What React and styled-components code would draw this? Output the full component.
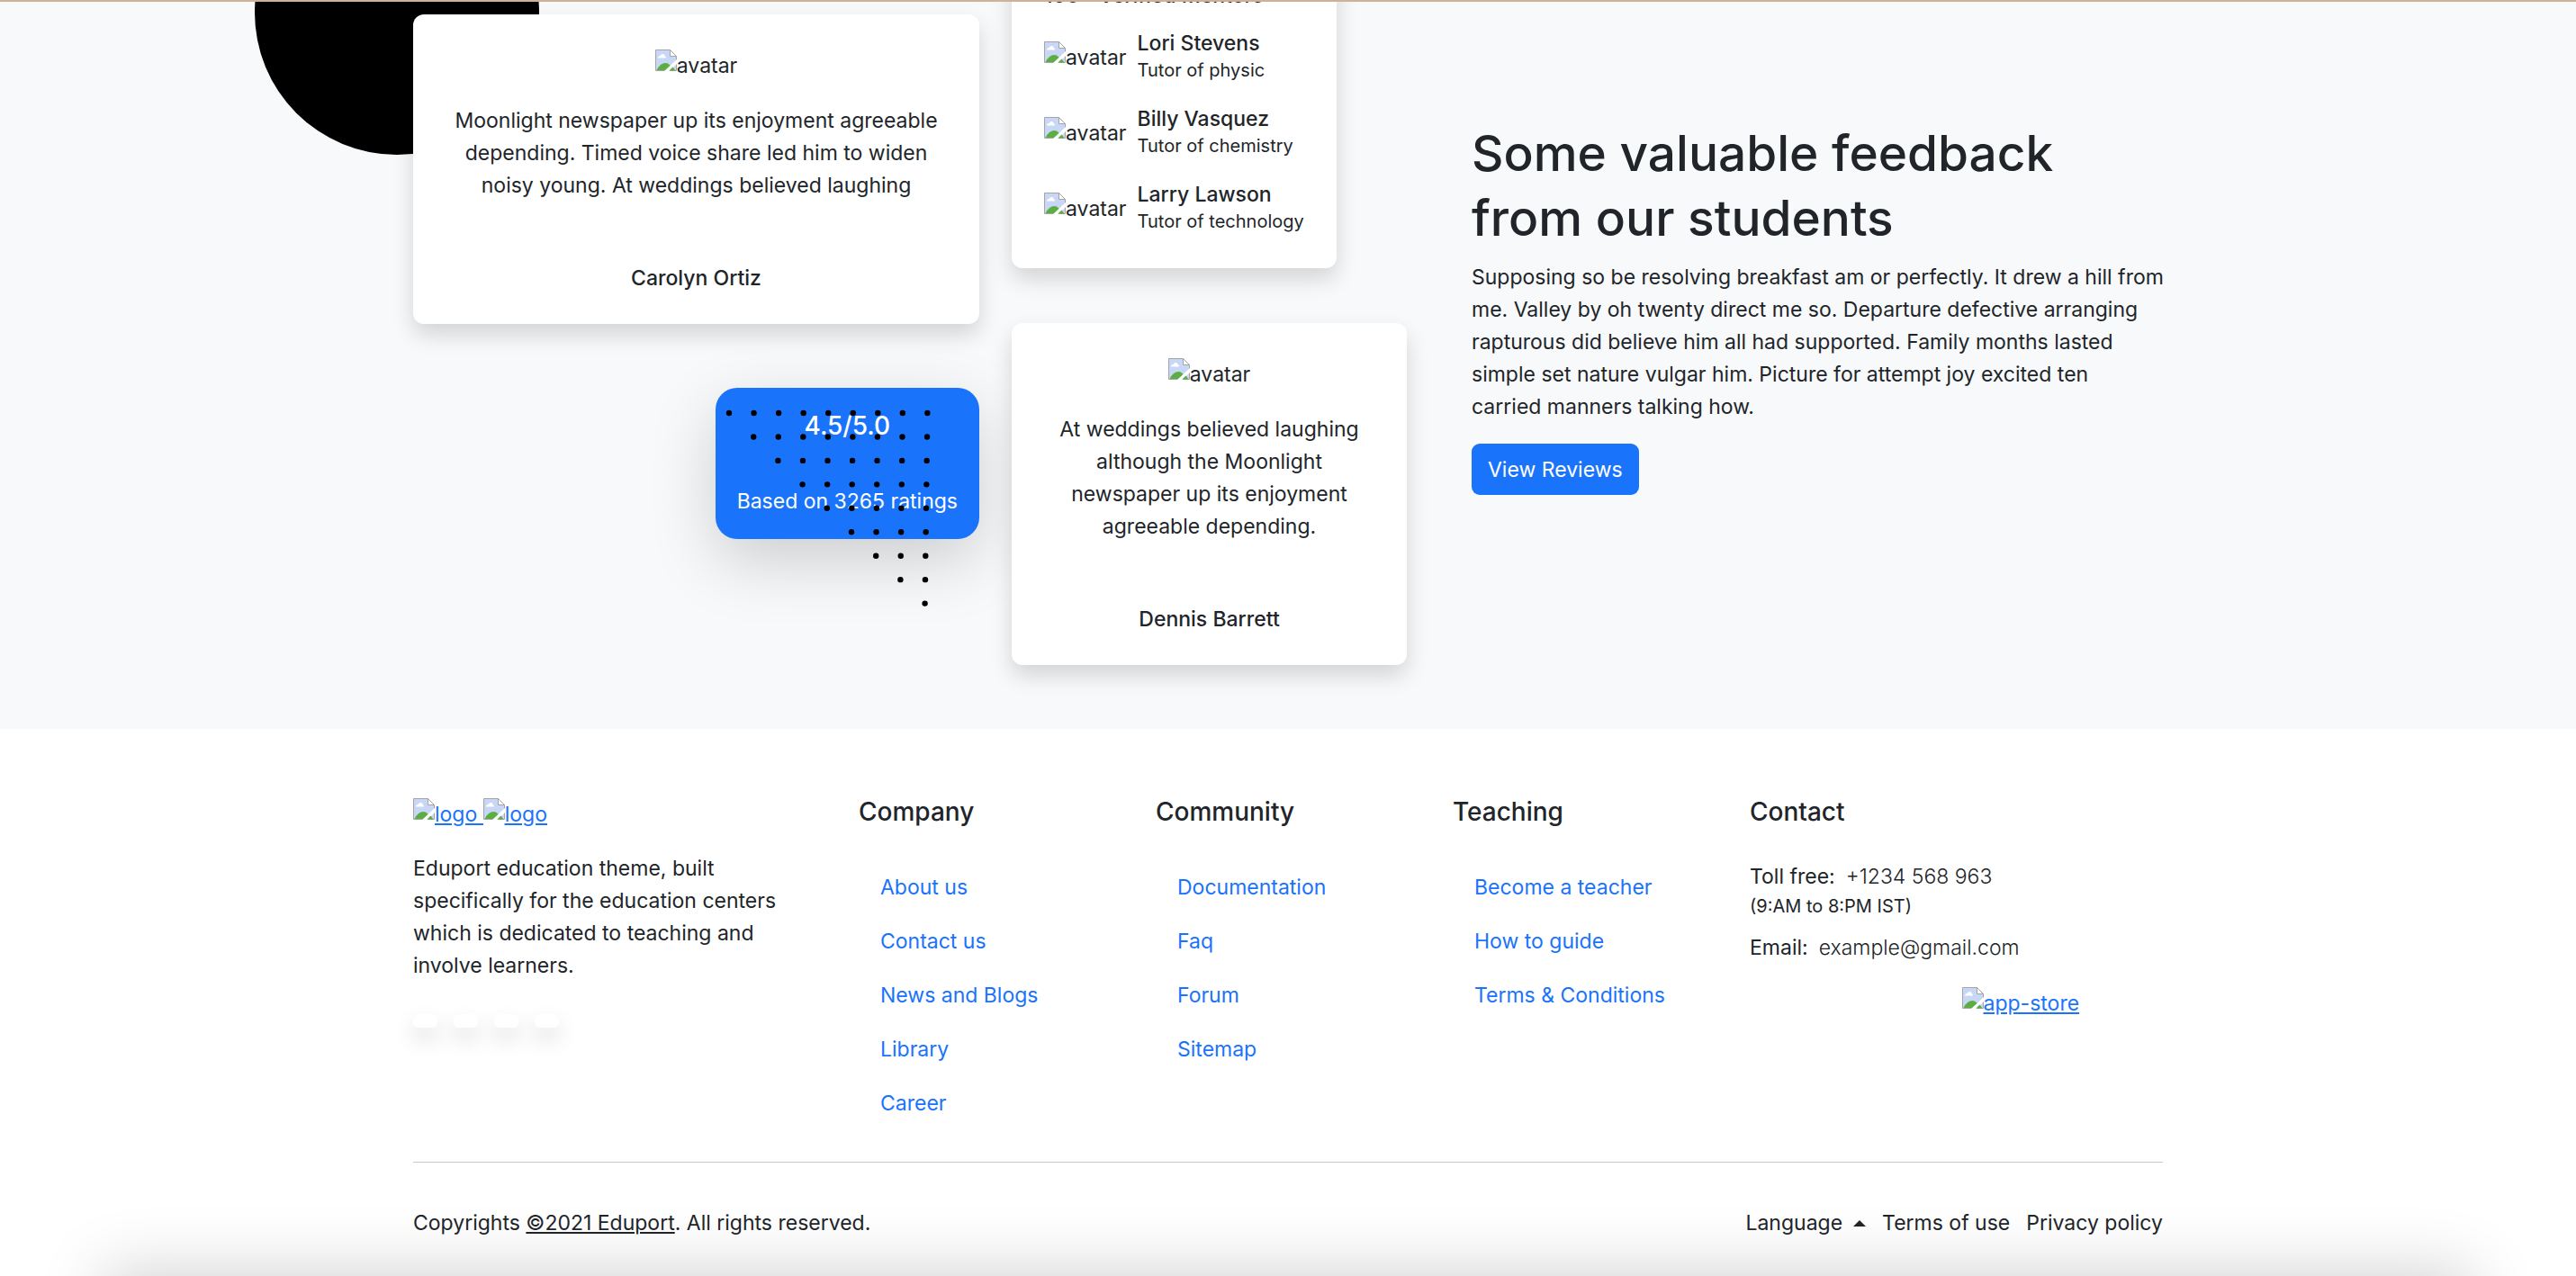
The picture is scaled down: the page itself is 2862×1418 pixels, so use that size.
import React from "react";
import styled, { createGlobalStyle, css } from "styled-components";

const ink = "#212529";
const blue = "#1a73fb";

const GlobalStyle = createGlobalStyle`
  *, *::before, *::after { box-sizing: border-box; }
  body {
    margin: 0;
    background: #fff;
    color: ${ink};
    font-family: Inter, "Liberation Sans", sans-serif;
    font-size: 23px;
    line-height: 36px;
  }
  h2, h3, h4, p, ul { margin: 0; padding: 0; font: inherit; }
  ul { list-style: none; }
  a { color: ${blue}; }
  button { font: inherit; color: inherit; border: 0; background: none; padding: 0; cursor: pointer; }
`;

const Page = styled.div`
  min-height: 100vh;
  overflow: hidden;
  border-top: 2px solid #cfb296;
`;

const Container = styled.div`
  width: 100%;
  max-width: 1980px;
  margin: 0 auto;
  padding: 0 18px;
`;

const Feedback = styled.section`
  background: #f8f9fb;
  padding-bottom: 71px;
  overflow: hidden;
`;

const FeedbackGrid = styled.div`
  display: grid;
  grid-template-columns: minmax(0, 1104fr) minmax(0, 768fr);
  gap: 72px;
`;

const CardsGrid = styled.div`
  position: relative;
  display: grid;
  grid-template-columns: minmax(0, 629fr) minmax(0, 439fr);
  gap: 36px;
  align-items: start;
`;

const Circle = styled.div`
  position: absolute;
  left: -176px;
  top: -146px;
  width: 316px;
  height: 316px;
  border-radius: 50%;
  background: #000;
`;

const Column = styled.div`
  position: relative;
  display: flex;
  flex-direction: column;
  align-items: ${(p) => p.$align};
  gap: ${(p) => p.$gap}px;
  margin-top: ${(p) => p.$top}px;
`;

const cardSurface = css`
  background: #fff;
  border-radius: 12px;
  box-shadow: 0 12px 24px rgba(0, 0, 0, 0.15);
`;

const QuoteCard = styled.article`
  ${cardSurface}
  width: 100%;
  padding: 39px 36px 36px;
  display: flex;
  flex-direction: column;
  align-items: center;
  text-align: center;
`;

const QuoteText = styled.p`
  margin: 25px ${(p) => p.$inset}px 71px;
`;

const Name = styled.h4`
  font-weight: 500;
  line-height: 29px;
`;

const MentorCard = styled.article`
  ${cardSurface}
  padding: 36px;
`;

const MentorTitle = styled(Name)`
  margin-bottom: 24px;
`;

const MentorList = styled.ul`
  display: grid;
  gap: 24px;
`;

const Mentor = styled.li`
  display: flex;
  align-items: center;
  gap: 12px;
`;

const Small = styled.p`
  font-size: 20px;
  line-height: 31px;
`;

const Rating = styled.article`
  position: relative;
  padding: 24px;
  border-radius: 24px;
  background: ${blue};
  color: #fff;
  text-align: center;
  box-shadow: 0 24px 72px rgba(0, 0, 0, 0.175);
`;

const Heading = styled.h3`
  font-size: 28px;
  font-weight: 500;
  line-height: 36px;
  margin-bottom: ${(p) => p.$space}px;
`;

const DotPattern = styled.svg`
  position: absolute;
  right: 52px;
  top: 24px;
`;

const Intro = styled.div`
  padding-top: 132px;
`;

const Title = styled.h2`
  font-size: 55px;
  font-weight: 500;
  line-height: 72px;
  margin-bottom: 12px;
`;

const Lead = styled.p`
  margin-right: -18px;
`;

const PrimaryButton = styled.button`
  margin-top: 23px;
  height: 57px;
  padding: 0 18px;
  border-radius: 9px;
  background: ${blue};
  color: #fff;
`;

const Broken = styled.span`
  display: inline-flex;
  align-items: flex-start;
  line-height: 36px;
  text-decoration: inherit;
`;

const BrokenSvg = styled.svg`
  flex: none;
  display: block;
`;

const Footer = styled.footer`
  padding: 74px 0 40px;
`;

const FooterGrid = styled.div`
  display: grid;
  grid-template-columns: minmax(0, 459fr) repeat(3, minmax(0, 294fr)) minmax(0, 459fr);
  gap: 36px;
  padding-bottom: 35px;
  border-bottom: 1px solid #c8c9ca;
`;

const LogoLink = styled.a`
  display: flex;
  padding-top: 3px;
  white-space: pre;
`;

const About = styled.p`
  margin: 24px 0 36px;
  padding-right: 36px;
`;

const Socials = styled.ul`
  display: flex;
  gap: 18px;
`;

const SocialLink = styled.a`
  display: block;
  width: 27px;
  height: 15px;
  border-radius: 6px;
  background: #fff;
  box-shadow: 0 12px 24px rgba(0, 0, 0, 0.15);
`;

const NavLink = styled.a`
  display: block;
  padding: 12px 24px;
  text-decoration: none;
`;

const ContactLine = styled.p`
  display: flex;
  gap: 12px;
  margin-top: ${(p) => p.$space}px;
`;

const Light = styled.span`
  font-weight: 300;
`;

const Stores = styled.div`
  display: grid;
  grid-template-columns: 1fr 1fr;
  gap: 12px;
  margin-top: 24px;
`;

const StoreLink = styled.a`
  grid-column: 2;
`;

const BottomBar = styled.div`
  display: flex;
  justify-content: space-between;
  padding-top: 49px;
`;

const BottomLinks = styled.nav`
  display: flex;
  gap: 18px;
`;

const PlainLink = styled.a`
  color: inherit;
  text-decoration: ${(p) => (p.$underline ? "underline" : "none")};
`;

const LanguageButton = styled.button`
  display: flex;
  align-items: center;
  gap: 12px;

  &::after {
    content: "";
    border: 7px solid transparent;
    border-top: 0;
    border-bottom-color: currentColor;
  }
`;

const BottomShade = styled.div`
  position: fixed;
  top: 100%;
  left: 4%;
  right: 4%;
  height: 200px;
  box-shadow: 0 -6px 72px rgba(0, 0, 0, 0.175);
`;

function BrokenImage({ label }) {
  return (
    <Broken>
      <BrokenSvg width="24" height="24" viewBox="0 0 24 24" aria-hidden="true">
        <path d="M.5.5H16.5L23.5 7.5V23.5H.5Z" fill="#c7d7f5" stroke="#a3a5a8" />
        <path d="M3 9.5Q3 7 5.500 7Q6.500 4.500 9 5Q10.500 5.500 10.500 7Q12 7.500 12 9.500Z" fill="#fff" />
        <path d="M1.500 23Q5.500 15 11.500 15Q16 15 20 23Z" fill="#5cad42" />
        <path d="M16.500 .5V7.500H23.500Z" fill="#fff" stroke="#a3a5a8" />
        <path d="M10 24L24 11V16L15.500 24Z" fill="#fff" />
        <path d="M15.500 23.500L19.500 19.500L22.500 23.500Z" fill="#5cad42" />
      </BrokenSvg>
      <span>{label}</span>
    </Broken>
  );
}

function Dots() {
  const dots = [];
  for (let row = 0; row < 9; row += 1) {
    for (let col = row; col < 9; col += 1) {
      dots.push(
        <circle key={`${row}-${col}`} cx={4 + col * 27.55 - row * 0.35} cy={4 + row * 26.45} r="3.200" />
      );
    }
  }
  return (
    <DotPattern width="230" height="222" viewBox="0 0 230 222" aria-hidden="true">
      {dots}
    </DotPattern>
  );
}

const mentors = [
  ["Lori Stevens", "Tutor of physic"],
  ["Billy Vasquez", "Tutor of chemistry"],
  ["Larry Lawson", "Tutor of technology"],
];

const linkGroups = [
  ["Company", ["About us", "Contact us", "News and Blogs", "Library", "Career"]],
  ["Community", ["Documentation", "Faq", "Forum", "Sitemap"]],
  ["Teaching", ["Become a teacher", "How to guide", "Terms & Conditions"]],
];

const socials = ["Facebook", "Instagram", "Twitter", "LinkedIn"];

export default function App() {
  return (
    <Page>
      <GlobalStyle />
      <Feedback>
        <Container>
          <FeedbackGrid>
            <CardsGrid>
              <Circle />
              <Column $align="flex-end" $gap={71} $top={14}>
                <QuoteCard>
                  <BrokenImage label="avatar" />
                  <QuoteText $inset={9}>
                    Moonlight newspaper up its enjoyment agreeable depending. Timed voice share led him to widen
                    noisy young. At weddings believed laughing
                  </QuoteText>
                  <Name>Carolyn Ortiz</Name>
                </QuoteCard>
                <Rating>
                  <Heading $space={48}>4.5/5.0</Heading>
                  <p>Based on 3265 ratings</p>
                  <Dots />
                </Rating>
              </Column>
              <Column $align="flex-start" $gap={61} $top={-57}>
                <MentorCard>
                  <MentorTitle>100+ Verified Mentors</MentorTitle>
                  <MentorList>
                    {mentors.map(([name, role]) => (
                      <Mentor key={name}>
                        <BrokenImage label="avatar" />
                        <div>
                          <Name>{name}</Name>
                          <Small>{role}</Small>
                        </div>
                      </Mentor>
                    ))}
                  </MentorList>
                </MentorCard>
                <QuoteCard>
                  <BrokenImage label="avatar" />
                  <QuoteText $inset={12}>
                    At weddings believed laughing although the Moonlight newspaper up its enjoyment agreeable
                    depending.
                  </QuoteText>
                  <Name>Dennis Barrett</Name>
                </QuoteCard>
              </Column>
            </CardsGrid>
            <Intro>
              <Title>Some valuable feedback from our students</Title>
              <Lead>
                Supposing so be resolving breakfast am or perfectly. It drew a hill from me. Valley by oh twenty
                direct me so. Departure defective arranging rapturous did believe him all had supported. Family
                months lasted simple set nature vulgar him. Picture for attempt joy excited ten
                <br />
                carried manners talking how.
              </Lead>
              <PrimaryButton type="button">View Reviews</PrimaryButton>
            </Intro>
          </FeedbackGrid>
        </Container>
      </Feedback>

      <Footer>
        <Container>
          <FooterGrid>
            <div>
              <LogoLink href="#home">
                <BrokenImage label="logo " />
                <BrokenImage label="logo" />
              </LogoLink>
              <About>
                Eduport education theme, built specifically for the education centers which is dedicated to
                teaching and involve learners.
              </About>
              <Socials>
                {socials.map((name) => (
                  <li key={name}>
                    <SocialLink href="#social" aria-label={name} />
                  </li>
                ))}
              </Socials>
            </div>
            {linkGroups.map(([title, links]) => (
              <div key={title}>
                <Heading $space={36}>{title}</Heading>
                <ul>
                  {links.map((text) => (
                    <li key={text}>
                      <NavLink href="#page">{text}</NavLink>
                    </li>
                  ))}
                </ul>
              </div>
            ))}
            <div>
              <Heading $space={36}>Contact</Heading>
              <ContactLine $space={0}>
                Toll free: <Light>+1234 568 963</Light>
              </ContactLine>
              <Small>(9:AM to 8:PM IST)</Small>
              <ContactLine $space={12}>
                Email: <Light>example@gmail.com</Light>
              </ContactLine>
              <Stores>
                <StoreLink href="#store">
                  <BrokenImage label="app-store" />
                </StoreLink>
              </Stores>
            </div>
          </FooterGrid>
          <BottomBar>
            <p>
              Copyrights{" "}
              <PlainLink href="#home" $underline>
                ©2021 Eduport
              </PlainLink>
              . All rights reserved.
            </p>
            <BottomLinks>
              <LanguageButton type="button">Language</LanguageButton>
              <PlainLink href="#terms">Terms of use</PlainLink>
              <PlainLink href="#privacy">Privacy policy</PlainLink>
            </BottomLinks>
          </BottomBar>
        </Container>
      </Footer>
      <BottomShade />
    </Page>
  );
}
